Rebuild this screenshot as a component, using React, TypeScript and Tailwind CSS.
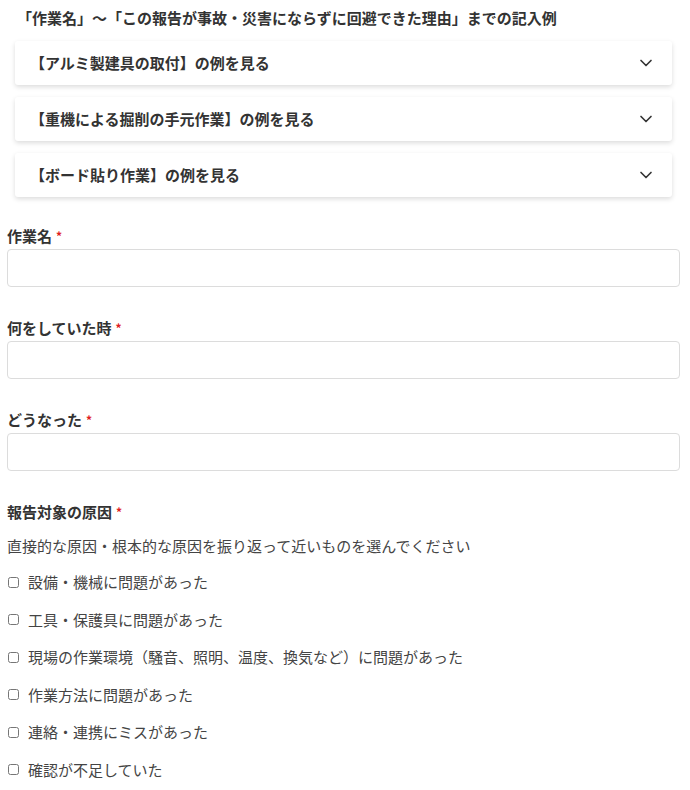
import React from 'react';
import { ChevronDown } from 'lucide-react';

const EXAMPLES = [
  '【アルミ製建具の取付】の例を見る',
  '【重機による掘削の手元作業】の例を見る',
  '【ボード貼り作業】の例を見る',
];

const FIELDS = ['作業名', '何をしていた時', 'どうなった'];

const CAUSES = [
  '設備・機械に問題があった',
  '工具・保護具に問題があった',
  '現場の作業環境（騒音、照明、温度、換気など）に問題があった',
  '作業方法に問題があった',
  '連絡・連携にミスがあった',
  '確認が不足していた',
];

const Required: React.FC = () => (
  <span className="ml-[4px] text-[12px] font-bold text-[#e02020]">*</span>
);

const App: React.FC = () => {
  return (
    <div className="min-h-[790px] w-[690px] bg-white pl-[7px] pr-[10px] font-['Noto_Sans_CJK_JP','Noto_Sans',sans-serif] text-[#333]">
      <h2 className="ml-[10px] pt-[7px] text-[15px] font-bold leading-[22px]">
        「作業名」～「この報告が事故・災害にならずに回避できた理由」までの記入例
      </h2>

      <div className="mt-[12px] flex flex-col gap-[12px] px-[8px]">
        {EXAMPLES.map((e) => (
          <div
            key={e}
            className="flex h-[44px] items-center justify-between rounded-[3px] bg-white pl-[15px] pr-[16px] shadow-[0_2px_5px_rgba(0,0,0,0.14)]"
          >
            <span className="text-[15px] font-bold leading-[22px]">{e}</span>
            <ChevronDown size={20} strokeWidth={2} className="text-[#333]" />
          </div>
        ))}
      </div>

      <div className="mt-[28px] flex flex-col gap-[30px]">
        {FIELDS.map((f) => (
          <div key={f}>
            <label className="flex items-center text-[15px] font-bold leading-[22px]">
              {f}
              <Required />
            </label>
            <input
              type="text"
              className="mt-[2px] h-[38px] w-full rounded-[4px] border border-[#dcdcdc] bg-white px-3 outline-none"
            />
          </div>
        ))}

        <div>
          <label className="flex items-center text-[15px] font-bold leading-[22px]">
            報告対象の原因
            <Required />
          </label>
          <p className="mt-[12px] text-[15px] leading-[22px] text-[#444]">
            直接的な原因・根本的な原因を振り返って近いものを選んでください
          </p>
          <div className="mt-[14px] flex flex-col gap-[15.5px]">
            {CAUSES.map((c) => (
              <label key={c} className="flex items-center gap-[9px] pl-[1px] text-[15px] leading-[22px] text-[#444]">
                <input type="checkbox" className="m-0 h-[11px] w-[11px]" />
                {c}
              </label>
            ))}
          </div>
        </div>
      </div>
    </div>
  );
};

export default App;
